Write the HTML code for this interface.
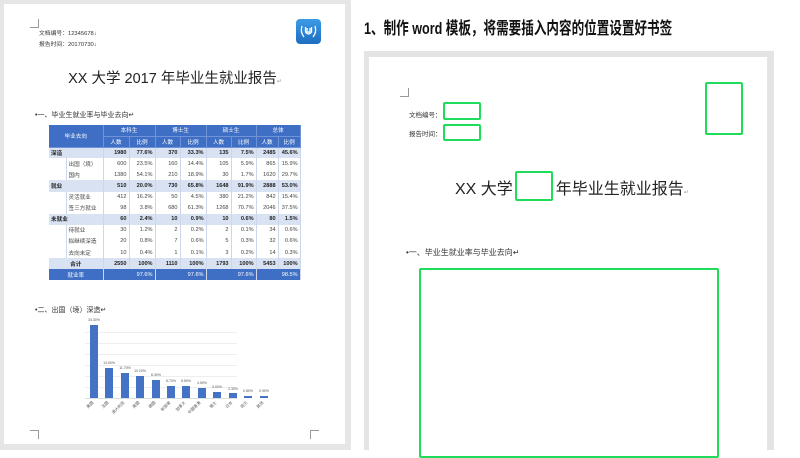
<!DOCTYPE html>
<html><head><meta charset="utf-8"><style>
*{margin:0;padding:0;box-sizing:border-box}
body{width:800px;height:450px;overflow:hidden;background:#fff;position:relative;font-family:"Liberation Sans","Noto Sans CJK SC",sans-serif;color:#333}
.a{position:absolute}
.g{border:2.5px solid #1fdc5a;border-radius:2px}
table{border-collapse:collapse;table-layout:fixed;font-size:5.6px}
td{height:11.1px;padding:0 2px;text-align:right;border-right:1px solid #cdd6ea;white-space:nowrap;overflow:hidden;color:#444}
tr.h td{background:#3f6fc4;color:#fff;text-align:center;border-right:1px solid #6f93d6;border-bottom:1px solid #6f93d6}
tr.m td{background:#d9e2f3;font-weight:bold;color:#222}
tr.m td:first-child{text-align:left}
td.l{text-align:left}
tr.f td{background:#3f6fc4;color:#fff}
.bar{position:absolute;bottom:0;width:8px;background:#4472c4}
.v{position:absolute;font-size:3.5px;color:#555;width:20px;text-align:center}
.x{position:absolute;font-size:4px;color:#555;transform:rotate(-45deg);transform-origin:right top;white-space:nowrap;text-align:right}
.cm{position:absolute;width:9px;height:9px;border-color:#999;border-style:solid}
</style></head><body>
<div class="a" style="left:0;top:0;width:351px;height:450px;background:#e6e6e6"></div>
<div class="a" style="left:4px;top:4px;width:341px;height:440px;background:#fff"></div>
<div class="cm" style="left:30px;top:19px;border-width:0 1px 1px 0"></div>
<div class="cm" style="left:30px;top:430px;border-width:1px 1px 0 0"></div>
<div class="cm" style="left:310px;top:430px;border-width:1px 0 0 1px"></div>
<div class="a" style="left:39px;top:29px;font-size:5.8px;color:#333;line-height:11px">文档编号：12345678↓<br>报告时间：20170730↓</div>
<div class="a" style="left:296px;top:19px;width:25px;height:25px;border-radius:4px;background:linear-gradient(#3c9be6,#1f6dc0)">
<svg width="25" height="25" viewBox="0 0 25 25"><g fill="none" stroke="#fff" stroke-width="1.3"><path d="M6 7 Q4 13 8 18"/><path d="M19 7 Q21 13 17 18"/><path d="M9.5 8 V13 Q12.5 17 15.5 13 V8"/><path d="M11 9 V12.5 Q12.5 14 14 12.5 V9"/></g></svg></div>
<div class="a" style="left:0;width:350px;top:67px;text-align:center;font-size:14.5px;color:#222">XX 大学 2017 年毕业生就业报告<span style="font-size:6px;color:#999">↵</span></div>
<div class="a" style="left:35px;top:110px;font-size:7px;color:#333">•一、毕业生就业率与毕业去向↵</div>
<table class="a" style="left:49px;top:125px;width:251px">
<colgroup><col style="width:17px"><col style="width:37px"><col style="width:26px"><col style="width:26px"><col style="width:25px"><col style="width:26px"><col style="width:25px"><col style="width:25px"><col style="width:22px"><col style="width:22px"></colgroup>
<tr class="h"><td colspan="2" rowspan="2">毕业去向</td><td colspan="2">本科生</td><td colspan="2">博士生</td><td colspan="2">硕士生</td><td colspan="2">总体</td></tr>
<tr class="h"><td>人数</td><td>比例</td><td>人数</td><td>比例</td><td>人数</td><td>比例</td><td>人数</td><td>比例</td></tr>
<tr class="m"><td colspan="2">深造</td><td>1980</td><td>77.6%</td><td>370</td><td>33.3%</td><td>135</td><td>7.5%</td><td>2485</td><td>45.6%</td></tr>
<tr><td></td><td class="l">出国（境）</td><td>600</td><td>23.5%</td><td>160</td><td>14.4%</td><td>105</td><td>5.9%</td><td>865</td><td>15.9%</td></tr>
<tr><td></td><td class="l">国内</td><td>1380</td><td>54.1%</td><td>210</td><td>18.9%</td><td>30</td><td>1.7%</td><td>1620</td><td>29.7%</td></tr>
<tr class="m"><td colspan="2">就业</td><td>510</td><td>20.0%</td><td>730</td><td>65.8%</td><td>1648</td><td>91.9%</td><td>2888</td><td>53.0%</td></tr>
<tr><td></td><td class="l">灵活就业</td><td>412</td><td>16.2%</td><td>50</td><td>4.5%</td><td>380</td><td>21.2%</td><td>842</td><td>15.4%</td></tr>
<tr><td></td><td class="l">签三方就业</td><td>98</td><td>3.8%</td><td>680</td><td>61.3%</td><td>1268</td><td>70.7%</td><td>2046</td><td>37.5%</td></tr>
<tr class="m"><td colspan="2">未就业</td><td>60</td><td>2.4%</td><td>10</td><td>0.9%</td><td>10</td><td>0.6%</td><td>80</td><td>1.5%</td></tr>
<tr><td></td><td class="l">待就业</td><td>30</td><td>1.2%</td><td>2</td><td>0.2%</td><td>2</td><td>0.1%</td><td>34</td><td>0.6%</td></tr>
<tr><td></td><td class="l">拟继续深造</td><td>20</td><td>0.8%</td><td>7</td><td>0.6%</td><td>5</td><td>0.3%</td><td>32</td><td>0.6%</td></tr>
<tr><td></td><td class="l">去向未定</td><td>10</td><td>0.4%</td><td>1</td><td>0.1%</td><td>3</td><td>0.2%</td><td>14</td><td>0.3%</td></tr>
<tr class="m"><td colspan="2" style="text-align:center">合计</td><td>2550</td><td>100%</td><td>1110</td><td>100%</td><td>1793</td><td>100%</td><td>5453</td><td>100%</td></tr>
<tr class="f"><td colspan="2" style="text-align:center;color:#fff">就业率</td><td colspan="2" style="color:#fff">97.6%</td><td colspan="2" style="color:#fff">97.6%</td><td colspan="2" style="color:#fff">97.6%</td><td colspan="2" style="color:#fff">98.5%</td></tr>
</table>
<div class="a" style="left:35px;top:305px;font-size:7px;color:#333">•二、出国（境）深造↵</div>
<div class="a" style="left:85px;top:322px;width:152px;height:88px">
<div class="a" style="left:0;right:0;top:10px;border-top:1px solid #eee"></div>
<div class="a" style="left:0;right:0;top:21px;border-top:1px solid #eee"></div>
<div class="a" style="left:0;right:0;top:32px;border-top:1px solid #eee"></div>
<div class="a" style="left:0;right:0;top:43px;border-top:1px solid #eee"></div>
<div class="a" style="left:0;right:0;top:54px;border-top:1px solid #eee"></div>
<div class="a" style="left:0;right:0;top:65px;border-top:1px solid #eee"></div>
<div class="a" style="left:0;right:0;top:76px;border-top:1px solid #ddd"></div>
</div>
<div class="a" style="left:85px;top:320px;width:190px;height:78px">
<div class="bar" style="left:5px;height:73px"></div><div class="v" style="left:-1px;top:-2px">33.30%</div>
<div class="bar" style="left:20px;height:30px"></div><div class="v" style="left:14px;top:41px">13.90%</div>
<div class="bar" style="left:36px;height:25px"></div><div class="v" style="left:30px;top:46px">11.70%</div>
<div class="bar" style="left:51px;height:22px"></div><div class="v" style="left:45px;top:49px">10.20%</div>
<div class="bar" style="left:67px;height:18px"></div><div class="v" style="left:61px;top:53px">8.30%</div>
<div class="bar" style="left:82px;height:12px"></div><div class="v" style="left:76px;top:59px">5.70%</div>
<div class="bar" style="left:97px;height:12px"></div><div class="v" style="left:91px;top:59px">5.50%</div>
<div class="bar" style="left:113px;height:10px"></div><div class="v" style="left:107px;top:61px">4.50%</div>
<div class="bar" style="left:128px;height:6px"></div><div class="v" style="left:122px;top:65px">3.00%</div>
<div class="bar" style="left:144px;height:5px"></div><div class="v" style="left:138px;top:67px">2.30%</div>
<div class="bar" style="left:159px;height:2px"></div><div class="v" style="left:153px;top:69px">0.80%</div>
<div class="bar" style="left:175px;height:2px"></div><div class="v" style="left:169px;top:69px">0.90%</div>
</div>
<div class="x" style="left:75px;top:400px;width:16px">美国</div>
<div class="x" style="left:90px;top:400px;width:16px">法国</div>
<div class="x" style="left:98px;top:400px;width:24px">澳大利亚</div>
<div class="x" style="left:121px;top:400px;width:16px">英国</div>
<div class="x" style="left:137px;top:400px;width:16px">德国</div>
<div class="x" style="left:148px;top:400px;width:20px">新加坡</div>
<div class="x" style="left:163px;top:400px;width:20px">加拿大</div>
<div class="x" style="left:174px;top:400px;width:24px">中国香港</div>
<div class="x" style="left:198px;top:400px;width:16px">瑞士</div>
<div class="x" style="left:214px;top:400px;width:16px">日本</div>
<div class="x" style="left:229px;top:400px;width:16px">荷兰</div>
<div class="x" style="left:245px;top:400px;width:16px">其他</div>

<div class="a" style="left:364px;top:14px;font-size:17px;font-weight:bold;color:#111;white-space:nowrap;transform:scaleX(0.74);transform-origin:left top">1、制作 word 模板，将需要插入内容的位置设置好书签</div>
<div class="a" style="left:364px;top:51px;width:410px;height:399px;background:#e4e4e4"></div>
<div class="a" style="left:369px;top:57px;width:398px;height:393px;background:#fff"></div>
<div class="cm" style="left:400px;top:88px;border-width:0 1px 1px 0"></div>
<div class="a" style="left:409px;top:106px;font-size:6.5px;color:#333;line-height:19px">文档编号：<br>报告时间：</div>
<div class="a g" style="left:443px;top:102px;width:38px;height:18px"></div>
<div class="a g" style="left:443px;top:124px;width:38px;height:17px"></div>
<div class="a g" style="left:705px;top:82px;width:38px;height:53px"></div>
<div class="a" style="left:455px;top:175px;font-size:16px;color:#222;white-space:nowrap">XX 大学<span style="display:inline-block;width:43px"></span>年毕业生就业报告<span style="font-size:6px;color:#999">↵</span></div>
<div class="a g" style="left:515px;top:171px;width:38px;height:30px"></div>
<div class="a" style="left:406px;top:247px;font-size:8px;color:#333">•一、毕业生就业率与毕业去向↵</div>
<div class="a g" style="left:419px;top:268px;width:300px;height:190px"></div>
</body></html>
